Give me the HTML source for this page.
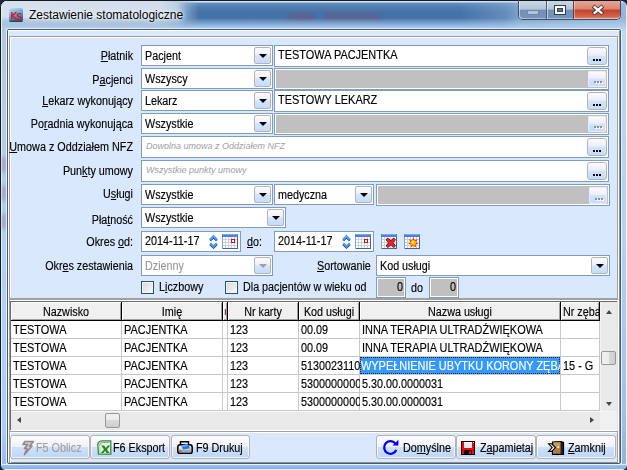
<!DOCTYPE html><html><head><meta charset="utf-8"><style>

html,body{margin:0;padding:0;width:627px;height:470px;overflow:hidden;background:#1b2a3c;}
body{position:relative;font-family:"Liberation Sans",sans-serif;font-size:11px;color:#000;}
div{position:absolute;box-sizing:border-box;}
.t{height:13px;line-height:13px;white-space:nowrap;font-size:11px;-webkit-text-stroke-width:0.2px;}
.t2{height:14px;line-height:14px;white-space:nowrap;font-size:12px;-webkit-text-stroke-width:0.15px;}
.t2 u{text-decoration:underline;text-underline-offset:1px;}
.t u{text-decoration:underline;text-underline-offset:1px;}
.ddb{width:17px;height:17px;border:1px solid #b4b4b4;border-radius:2px;background:linear-gradient(#fbfbff 0%,#eef0fb 45%,#d6e6fc 50%,#c4dcfb 100%);}
.db{border:1px solid #b4b4b4;border-radius:3px;background:linear-gradient(#fbfbff 0%,#eeeefb 45%,#d3e3fb 50%,#c6dcfb 100%);}
.db.dis{border-radius:1px;border-color:#eeeafa;background:linear-gradient(#fbfbff 0%,#eeeefb 45%,#d3e3fb 50%,#c6dcfb 100%);}
.btn{border:1px solid #b3b3b3;border-radius:3px;background:linear-gradient(#fdfdff 0%,#eff0fb 48%,#cfe1f9 52%,#bdd6f6 100%);box-shadow:inset 0 0 0 1px rgba(255,255,255,.7);}

</style></head><body>
<div style="left:0px;top:0px;width:627px;height:470px;border-radius:7px 7px 6px 6px;background:#b7cfea;border-top:1px solid #111a24;border-left:1px solid #111a24;"></div>
<div style="left:1px;top:1px;width:626px;height:469px;border-radius:6px 6px 6px 6px;border:1px solid #e6f0fa;"></div>
<div style="left:1px;top:1px;width:625px;height:28px;border-radius:6px 6px 0 0;background:linear-gradient(180deg,#dce7f2 0px,#dce7f2 1px,#6490c2 2px,#507db1 6px,#4572a6 12px,#4673a7 17px,#6f99c9 21px,#a2c2e7 26px,#b2cdec 28px);"></div>
<div style="left:460px;top:1px;width:166px;height:28px;border-radius:0 6px 0 0;background:linear-gradient(90deg,rgba(170,200,230,0) 0px,rgba(170,200,230,.3) 45px,rgba(180,208,236,.5) 60px,rgba(185,210,238,.7) 166px);"></div>
<div style="left:1px;top:1px;width:215px;height:28px;border-radius:6px 0 0 0;background:linear-gradient(90deg,#d6e1ec 0px,#d2deea 160px,#bccfe2 176px,rgba(170,195,222,.5) 186px,rgba(150,180,215,0) 198px);-webkit-mask-image:linear-gradient(180deg,#000 0px,#000 16px,rgba(0,0,0,.25) 26px,rgba(0,0,0,.15) 28px);"></div>
<div style="left:288px;top:14px;width:26px;height:5px;background:rgba(170,50,70,.35);filter:blur(2px);"></div>
<div style="left:324px;top:14px;width:58px;height:5px;background:rgba(170,50,70,.3);filter:blur(2px);"></div>
<div style="left:1px;top:6px;width:1px;height:458px;background:rgba(235,243,250,.9);"></div>
<div style="left:1px;top:29px;width:6px;height:436px;background:linear-gradient(90deg,#e6f0fa 0px,#e6f0fa 1px,rgba(0,0,0,0) 1px,rgba(0,0,0,0) 5px,rgba(225,238,252,.8) 5px),linear-gradient(180deg,#b4c8de 0px,#b6cce6 120px,#b2d0f4 260px,#aacdf6 400px,#98bce8 436px);border-radius:0 0 0 5px;"></div>
<div style="left:2px;top:157px;width:4px;height:15px;background:rgba(140,100,140,.5);filter:blur(2px);"></div>
<div style="left:2px;top:186px;width:4px;height:15px;background:rgba(140,100,140,.5);filter:blur(2px);"></div>
<div style="left:2px;top:214px;width:4px;height:15px;background:rgba(140,100,140,.5);filter:blur(2px);"></div>
<div style="left:621px;top:29px;width:6px;height:436px;background:linear-gradient(90deg,#e0eefc 0px,#e0eefc 1px,rgba(0,0,0,0) 1px,rgba(0,0,0,0) 5px,#f0f8ff 5px),linear-gradient(180deg,#bcd8f6 0px,#b4d3f5 200px,#9ec2ec 380px,#8db3e2 436px);border-radius:0 0 6px 0;"></div>
<div style="left:1px;top:464px;width:626px;height:6px;background:linear-gradient(180deg,#d8ecfc 0px,#d8ecfc 1px,#9cc1ea 1px,#87afe0 5px,#e8f0f8 5px);border-radius:0 0 5px 5px;"></div>
<div style="left:6px;top:28px;width:616px;height:437px;border:1px solid rgba(235,244,252,.8);border-radius:3px;"></div>
<div style="left:7px;top:29px;width:614px;height:435px;border:1px solid #4a5a6c;border-radius:2px;"></div>
<div style="left:8px;top:30px;width:612px;height:433px;background:#dae8fe;border-top:1px solid #fff;border-left:1px solid #fff;border-right:1px solid #8f8f8f;border-bottom:1px solid #8f8f8f;"></div>
<svg style="position:absolute;left:9px;top:8px;overflow:visible" width="14" height="14" viewBox="0 0 14 14"><defs><linearGradient id="ig" x1="0" y1="0" x2="0.4" y2="1"><stop offset="0" stop-color="#c8e6f6"/><stop offset="0.35" stop-color="#86c4ec"/><stop offset="1" stop-color="#24628f"/></linearGradient></defs><rect x="0" y="0" width="14" height="14" rx="2" fill="url(#ig)"/><rect x="0.5" y="12.8" width="13" height="1.2" rx="0.6" fill="#183a58" opacity=".75"/><path d="M1.5 2.2 L12.5 2.2" stroke="#8d9aa6" stroke-width="1" stroke-dasharray="1.2 .5" opacity=".6"/><path d="M2.8 4 L2.8 11.6 M7.4 4 L3.4 7.6 L7.6 11.6" fill="none" stroke="#e5141e" stroke-width="1.45"/><path d="M12.2 6.3 Q11.2 5.5 9.8 5.6 Q8 5.8 8.3 7.3 Q8.6 8.3 10.3 8.6 Q12.3 9 12.1 10.5 Q11.7 11.8 9.6 11.7 Q8.3 11.6 7.7 11" fill="none" stroke="#e5141e" stroke-width="1.35"/></svg>
<div style="left:29px;top:8px;font-size:12px;line-height:14px;color:#000;white-space:nowrap;text-shadow:0 0 6px rgba(255,255,255,.9),0 0 3px rgba(255,255,255,.8);">Zestawienie stomatologiczne</div>
<div style="left:518px;top:0px;width:103px;height:20px;border:1px solid #3f4e60;border-top:none;border-radius:0 0 5px 5px;overflow:hidden;"></div>
<div style="left:519px;top:1px;width:27px;height:18px;background:linear-gradient(180deg,#cbd8e6 0%,#b3c4d7 45%,#7090b7 52%,#7595bd 100%);border-radius:0 0 0 4px;box-shadow:inset 1px 0 0 rgba(255,255,255,.5),inset 0 -1px 0 rgba(255,255,255,.4);"></div>
<div style="left:546px;top:1px;width:1px;height:18px;background:#4d5c6e;"></div>
<div style="left:547px;top:1px;width:26px;height:18px;background:linear-gradient(180deg,#cbd8e6 0%,#b3c4d7 45%,#7090b7 52%,#7595bd 100%);box-shadow:inset 1px 0 0 rgba(255,255,255,.5),inset 0 -1px 0 rgba(255,255,255,.4);"></div>
<div style="left:573px;top:1px;width:1px;height:18px;background:#6a3a30;"></div>
<div style="left:574px;top:1px;width:46px;height:18px;background:linear-gradient(180deg,#e7a796 0%,#d78571 45%,#c2412a 50%,#d2634a 85%,#e5917a 100%);border-radius:0 0 4px 0;box-shadow:inset 1px 0 0 rgba(255,255,255,.4),inset 0 -1px 0 rgba(255,255,255,.4);"></div>
<div style="left:527px;top:10px;width:12px;height:5px;background:#b2c4d8;border:1px solid #74879e;"></div>
<div style="left:554px;top:5px;width:12px;height:10px;border:1px solid #2f3d52;background:#fff;"></div>
<div style="left:557px;top:8px;width:6px;height:4px;background:#5a7090;border:1px solid #34465e;"></div>
<svg style="position:absolute;left:590px;top:3px;overflow:visible" width="16" height="14" viewBox="0 0 16 14"><path d="M4.6 4.2 L11.4 9.8 M11.4 4.2 L4.6 9.8" stroke="#3a3434" stroke-width="4.0" stroke-linecap="square"/><path d="M4.6 4.2 L11.4 9.8 M11.4 4.2 L4.6 9.8" stroke="#ffffff" stroke-width="2.3" stroke-linecap="square"/></svg>
<div style="left:10px;top:37px;width:609px;height:263px;border:1px solid #fff;"></div>
<div style="left:9px;top:36px;width:609px;height:263px;border:1px solid #a0a0a0;"></div>
<div class="t2" style="left:-167px;width:300px;text-align:right;top:49px;transform:scaleX(0.8942);transform-origin:100% 0;"><u>P</u>łatnik</div>
<div style="left:141px;top:45px;width:132px;height:21px;border:1px solid #7f9db9;box-sizing:border-box;background:#fff;"></div>
<div class="ddb" style="left:254px;top:47px;"></div>
<div style="left:258.5px;top:54px;width:0;height:0;border-left:4px solid transparent;border-right:4px solid transparent;border-top:4px solid #000;"></div>
<div class="t2" style="left:145px;top:49px;transform:scaleX(0.8962);transform-origin:0 0;color:#000;">Pacjent</div>
<div style="left:274px;top:45px;width:335px;height:22px;border:1px solid #7f9db9;box-sizing:border-box;background:#fff;"></div>
<div class="t2" style="left:278px;top:48px;transform:scaleX(0.9115);transform-origin:0 0;">TESTOWA PACJENTKA</div>
<div class="db" style="left:587px;top:47px;width:20px;height:18px;"></div>
<div style="left:593px;top:59px;width:2px;height:2px;background:#000;"></div>
<div style="left:596px;top:59px;width:2px;height:2px;background:#000;"></div>
<div style="left:599px;top:59px;width:2px;height:2px;background:#000;"></div>
<div class="t2" style="left:-167px;width:300px;text-align:right;top:73px;transform:scaleX(0.8954);transform-origin:100% 0;">P<u>a</u>cjenci</div>
<div style="left:141px;top:68px;width:132px;height:21px;border:1px solid #7f9db9;box-sizing:border-box;background:#fff;"></div>
<div class="ddb" style="left:254px;top:70px;"></div>
<div style="left:258.5px;top:77px;width:0;height:0;border-left:4px solid transparent;border-right:4px solid transparent;border-top:4px solid #000;"></div>
<div class="t2" style="left:145px;top:72px;transform:scaleX(0.8996);transform-origin:0 0;color:#000;">Wszyscy</div>
<div style="left:274px;top:68px;width:335px;height:22px;border:1px solid #7f9db9;box-sizing:border-box;background:#c0c0c0;box-shadow:inset 1px 1px 0 #fff,inset -1px -1px 0 #fff;"></div>
<div class="db dis" style="left:588px;top:71px;width:18px;height:16px;"></div>
<div style="left:595px;top:82px;width:2px;height:2px;background:#fff;"></div>
<div style="left:594px;top:81px;width:2px;height:2px;background:#8f8f8f;"></div>
<div style="left:598px;top:82px;width:2px;height:2px;background:#fff;"></div>
<div style="left:597px;top:81px;width:2px;height:2px;background:#8f8f8f;"></div>
<div style="left:601px;top:82px;width:2px;height:2px;background:#fff;"></div>
<div style="left:600px;top:81px;width:2px;height:2px;background:#8f8f8f;"></div>
<div class="t2" style="left:-167px;width:300px;text-align:right;top:94px;transform:scaleX(0.8958);transform-origin:100% 0;"><u>L</u>ekarz wykonujący</div>
<div style="left:141px;top:90px;width:132px;height:21px;border:1px solid #7f9db9;box-sizing:border-box;background:#fff;"></div>
<div class="ddb" style="left:254px;top:92px;"></div>
<div style="left:258.5px;top:99px;width:0;height:0;border-left:4px solid transparent;border-right:4px solid transparent;border-top:4px solid #000;"></div>
<div class="t2" style="left:145px;top:94px;transform:scaleX(0.8972);transform-origin:0 0;color:#000;">Lekarz</div>
<div style="left:274px;top:90px;width:335px;height:22px;border:1px solid #7f9db9;box-sizing:border-box;background:#fff;"></div>
<div class="t2" style="left:278px;top:93px;transform:scaleX(0.9115);transform-origin:0 0;">TESTOWY LEKARZ</div>
<div class="db" style="left:587px;top:92px;width:20px;height:18px;"></div>
<div style="left:593px;top:104px;width:2px;height:2px;background:#000;"></div>
<div style="left:596px;top:104px;width:2px;height:2px;background:#000;"></div>
<div style="left:599px;top:104px;width:2px;height:2px;background:#000;"></div>
<div class="t2" style="left:-167px;width:300px;text-align:right;top:117px;transform:scaleX(0.8959);transform-origin:100% 0;">Po<u>r</u>adnia wykonująca</div>
<div style="left:141px;top:113px;width:132px;height:21px;border:1px solid #7f9db9;box-sizing:border-box;background:#fff;"></div>
<div class="ddb" style="left:254px;top:115px;"></div>
<div style="left:258.5px;top:122px;width:0;height:0;border-left:4px solid transparent;border-right:4px solid transparent;border-top:4px solid #000;"></div>
<div class="t2" style="left:145px;top:117px;transform:scaleX(0.8967);transform-origin:0 0;color:#000;">Wszystkie</div>
<div style="left:274px;top:113px;width:335px;height:22px;border:1px solid #7f9db9;box-sizing:border-box;background:#c0c0c0;box-shadow:inset 1px 1px 0 #fff,inset -1px -1px 0 #fff;"></div>
<div class="db dis" style="left:588px;top:116px;width:18px;height:16px;"></div>
<div style="left:595px;top:127px;width:2px;height:2px;background:#fff;"></div>
<div style="left:594px;top:126px;width:2px;height:2px;background:#8f8f8f;"></div>
<div style="left:598px;top:127px;width:2px;height:2px;background:#fff;"></div>
<div style="left:597px;top:126px;width:2px;height:2px;background:#8f8f8f;"></div>
<div style="left:601px;top:127px;width:2px;height:2px;background:#fff;"></div>
<div style="left:600px;top:126px;width:2px;height:2px;background:#8f8f8f;"></div>
<div class="t2" style="left:-167px;width:300px;text-align:right;top:140px;transform:scaleX(0.9006);transform-origin:100% 0;"><u>U</u>mowa z Oddziałem NFZ</div>
<div style="left:141px;top:136px;width:468px;height:22px;border:1px solid #7f9db9;box-sizing:border-box;background:#fff;"></div>
<div class="t" style="left:146px;top:140px;font-style:italic;color:#a0a0a0;font-size:9px;-webkit-text-stroke-width:0;">Dowolna umowa z Oddziałem NFZ</div>
<div class="db" style="left:587px;top:138px;width:20px;height:18px;"></div>
<div style="left:593px;top:150px;width:2px;height:2px;background:#000;"></div>
<div style="left:596px;top:150px;width:2px;height:2px;background:#000;"></div>
<div style="left:599px;top:150px;width:2px;height:2px;background:#000;"></div>
<div class="t2" style="left:-167px;width:300px;text-align:right;top:164px;transform:scaleX(0.8981);transform-origin:100% 0;">Pun<u>k</u>ty umowy</div>
<div style="left:141px;top:160px;width:468px;height:22px;border:1px solid #7f9db9;box-sizing:border-box;background:#fff;"></div>
<div class="t" style="left:146px;top:164px;font-style:italic;color:#a0a0a0;font-size:9px;-webkit-text-stroke-width:0;">Wszystkie punkty umowy</div>
<div class="db" style="left:587px;top:162px;width:20px;height:18px;"></div>
<div style="left:593px;top:174px;width:2px;height:2px;background:#000;"></div>
<div style="left:596px;top:174px;width:2px;height:2px;background:#000;"></div>
<div style="left:599px;top:174px;width:2px;height:2px;background:#000;"></div>
<div class="t2" style="left:-167px;width:300px;text-align:right;top:187px;transform:scaleX(0.8965);transform-origin:100% 0;">U<u>s</u>ługi</div>
<div style="left:141px;top:184px;width:132px;height:21px;border:1px solid #7f9db9;box-sizing:border-box;background:#fff;"></div>
<div class="ddb" style="left:254px;top:186px;"></div>
<div style="left:258.5px;top:193px;width:0;height:0;border-left:4px solid transparent;border-right:4px solid transparent;border-top:4px solid #000;"></div>
<div class="t2" style="left:145px;top:188px;transform:scaleX(0.8967);transform-origin:0 0;color:#000;">Wszystkie</div>
<div style="left:274px;top:184px;width:100px;height:21px;border:1px solid #7f9db9;box-sizing:border-box;background:#fff;"></div>
<div class="ddb" style="left:355px;top:186px;"></div>
<div style="left:359.5px;top:193px;width:0;height:0;border-left:4px solid transparent;border-right:4px solid transparent;border-top:4px solid #000;"></div>
<div class="t2" style="left:278px;top:188px;transform:scaleX(0.8977);transform-origin:0 0;color:#000;">medyczna</div>
<div style="left:376px;top:184px;width:234px;height:22px;border:1px solid #7f9db9;box-sizing:border-box;background:#c0c0c0;box-shadow:inset 1px 1px 0 #fff,inset -1px -1px 0 #fff;"></div>
<div class="db dis" style="left:589px;top:187px;width:18px;height:17px;"></div>
<div style="left:596px;top:199px;width:2px;height:2px;background:#fff;"></div>
<div style="left:595px;top:198px;width:2px;height:2px;background:#8f8f8f;"></div>
<div style="left:599px;top:199px;width:2px;height:2px;background:#fff;"></div>
<div style="left:598px;top:198px;width:2px;height:2px;background:#8f8f8f;"></div>
<div style="left:602px;top:199px;width:2px;height:2px;background:#fff;"></div>
<div style="left:601px;top:198px;width:2px;height:2px;background:#8f8f8f;"></div>
<div class="t2" style="left:-167px;width:300px;text-align:right;top:213px;transform:scaleX(0.8958);transform-origin:100% 0;">Pła<u>t</u>ność</div>
<div style="left:141px;top:207px;width:145px;height:21px;border:1px solid #7f9db9;box-sizing:border-box;background:#fff;"></div>
<div class="ddb" style="left:267px;top:209px;"></div>
<div style="left:271.5px;top:216px;width:0;height:0;border-left:4px solid transparent;border-right:4px solid transparent;border-top:4px solid #000;"></div>
<div class="t2" style="left:145px;top:211px;transform:scaleX(0.8967);transform-origin:0 0;color:#000;">Wszystkie</div>
<div class="t2" style="left:-167px;width:300px;text-align:right;top:235px;transform:scaleX(0.8967);transform-origin:100% 0;">Okres <u>o</u>d:</div>
<div style="left:141px;top:231px;width:100px;height:21px;border:1px solid #7f9db9;box-sizing:border-box;background:#fff;"></div>
<div class="t2" style="left:145px;top:234px;transform:scaleX(0.9001);transform-origin:0 0;">2014-11-17</div>
<div style="left:274px;top:231px;width:100px;height:21px;border:1px solid #7f9db9;box-sizing:border-box;background:#fff;"></div>
<div class="t2" style="left:278px;top:234px;transform:scaleX(0.9001);transform-origin:0 0;">2014-11-17</div>
<div class="t2" style="left:247px;top:235px;transform:scaleX(0.8934);transform-origin:0 0;"><u>d</u>o:</div>
<svg style="position:absolute;left:209px;top:234px;overflow:visible" width="10" height="15" viewBox="0 0 10 15"><path d="M1.2 5.6 L4.5 2.3 L7.8 5.6" fill="none" stroke="#123f96" stroke-width="2.4" stroke-linecap="butt" transform="translate(0,0.9)"/><path d="M1.2 5.6 L4.5 2.3 L7.8 5.6" fill="none" stroke="#4c9df6" stroke-width="2.2" stroke-linecap="butt"/><path d="M1.2 9.2 L4.5 12.5 L7.8 9.2" fill="none" stroke="#123f96" stroke-width="2.4" stroke-linecap="butt" transform="translate(0,0.9)"/><path d="M1.2 9.2 L4.5 12.5 L7.8 9.2" fill="none" stroke="#4c9df6" stroke-width="2.2" stroke-linecap="butt"/></svg>
<svg style="position:absolute;left:222px;top:234px;overflow:visible" width="16" height="15" viewBox="0 0 16 15" shape-rendering="crispEdges"><rect x="0" y="0" width="16" height="15" fill="#c4d2e6"/><rect x="15" y="0" width="1" height="15" fill="#4a6384"/><rect x="0" y="14" width="16" height="1" fill="#4a6384"/><rect x="0" y="0" width="1" height="15" fill="#8aa4c8"/><rect x="0" y="0" width="16" height="3" fill="#4b7fdc"/><rect x="1" y="0" width="14" height="1" fill="#7fa6ee"/><rect x="1" y="3" width="2" height="2" fill="#fff"/><rect x="4" y="3" width="2" height="2" fill="#fff"/><rect x="7" y="3" width="2" height="2" fill="#fff"/><rect x="10" y="3" width="2" height="2" fill="#fff"/><rect x="13" y="3" width="2" height="2" fill="#fff"/><rect x="1" y="6" width="2" height="2" fill="#fff"/><rect x="4" y="6" width="2" height="2" fill="#fff"/><rect x="7" y="6" width="2" height="2" fill="#fff"/><rect x="10" y="6" width="2" height="2" fill="#fff"/><rect x="13" y="6" width="2" height="2" fill="#fff"/><rect x="1" y="9" width="2" height="2" fill="#fff"/><rect x="4" y="9" width="2" height="2" fill="#fff"/><rect x="7" y="9" width="2" height="2" fill="#fff"/><rect x="10" y="9" width="2" height="2" fill="#fff"/><rect x="13" y="9" width="2" height="2" fill="#fff"/><rect x="1" y="12" width="2" height="2" fill="#fff"/><rect x="4" y="12" width="2" height="2" fill="#fff"/><rect x="7" y="12" width="2" height="2" fill="#fff"/><rect x="10" y="12" width="2" height="2" fill="#fff"/><rect x="13" y="12" width="2" height="2" fill="#fff"/><rect x="9" y="5" width="4" height="1" fill="#f00"/><rect x="9" y="8" width="4" height="1" fill="#f00"/><rect x="9" y="5" width="1" height="4" fill="#f00"/><rect x="12" y="5" width="1" height="4" fill="#f00"/></svg>
<svg style="position:absolute;left:342px;top:234px;overflow:visible" width="10" height="15" viewBox="0 0 10 15"><path d="M1.2 5.6 L4.5 2.3 L7.8 5.6" fill="none" stroke="#123f96" stroke-width="2.4" stroke-linecap="butt" transform="translate(0,0.9)"/><path d="M1.2 5.6 L4.5 2.3 L7.8 5.6" fill="none" stroke="#4c9df6" stroke-width="2.2" stroke-linecap="butt"/><path d="M1.2 9.2 L4.5 12.5 L7.8 9.2" fill="none" stroke="#123f96" stroke-width="2.4" stroke-linecap="butt" transform="translate(0,0.9)"/><path d="M1.2 9.2 L4.5 12.5 L7.8 9.2" fill="none" stroke="#4c9df6" stroke-width="2.2" stroke-linecap="butt"/></svg>
<svg style="position:absolute;left:355px;top:234px;overflow:visible" width="16" height="15" viewBox="0 0 16 15" shape-rendering="crispEdges"><rect x="0" y="0" width="16" height="15" fill="#c4d2e6"/><rect x="15" y="0" width="1" height="15" fill="#4a6384"/><rect x="0" y="14" width="16" height="1" fill="#4a6384"/><rect x="0" y="0" width="1" height="15" fill="#8aa4c8"/><rect x="0" y="0" width="16" height="3" fill="#4b7fdc"/><rect x="1" y="0" width="14" height="1" fill="#7fa6ee"/><rect x="1" y="3" width="2" height="2" fill="#fff"/><rect x="4" y="3" width="2" height="2" fill="#fff"/><rect x="7" y="3" width="2" height="2" fill="#fff"/><rect x="10" y="3" width="2" height="2" fill="#fff"/><rect x="13" y="3" width="2" height="2" fill="#fff"/><rect x="1" y="6" width="2" height="2" fill="#fff"/><rect x="4" y="6" width="2" height="2" fill="#fff"/><rect x="7" y="6" width="2" height="2" fill="#fff"/><rect x="10" y="6" width="2" height="2" fill="#fff"/><rect x="13" y="6" width="2" height="2" fill="#fff"/><rect x="1" y="9" width="2" height="2" fill="#fff"/><rect x="4" y="9" width="2" height="2" fill="#fff"/><rect x="7" y="9" width="2" height="2" fill="#fff"/><rect x="10" y="9" width="2" height="2" fill="#fff"/><rect x="13" y="9" width="2" height="2" fill="#fff"/><rect x="1" y="12" width="2" height="2" fill="#fff"/><rect x="4" y="12" width="2" height="2" fill="#fff"/><rect x="7" y="12" width="2" height="2" fill="#fff"/><rect x="10" y="12" width="2" height="2" fill="#fff"/><rect x="13" y="12" width="2" height="2" fill="#fff"/><rect x="9" y="5" width="4" height="1" fill="#f00"/><rect x="9" y="8" width="4" height="1" fill="#f00"/><rect x="9" y="5" width="1" height="4" fill="#f00"/><rect x="12" y="5" width="1" height="4" fill="#f00"/></svg>
<svg style="position:absolute;left:381px;top:234px;overflow:visible" width="16" height="15" viewBox="0 0 16 15" shape-rendering="crispEdges"><rect x="0" y="0" width="16" height="15" fill="#c4d2e6"/><rect x="15" y="0" width="1" height="15" fill="#4a6384"/><rect x="0" y="14" width="16" height="1" fill="#4a6384"/><rect x="0" y="0" width="1" height="15" fill="#8aa4c8"/><rect x="0" y="0" width="16" height="3" fill="#4b7fdc"/><rect x="1" y="0" width="14" height="1" fill="#7fa6ee"/><rect x="1" y="3" width="2" height="2" fill="#fff"/><rect x="4" y="3" width="2" height="2" fill="#fff"/><rect x="7" y="3" width="2" height="2" fill="#fff"/><rect x="10" y="3" width="2" height="2" fill="#fff"/><rect x="13" y="3" width="2" height="2" fill="#fff"/><rect x="1" y="6" width="2" height="2" fill="#fff"/><rect x="4" y="6" width="2" height="2" fill="#fff"/><rect x="7" y="6" width="2" height="2" fill="#fff"/><rect x="10" y="6" width="2" height="2" fill="#fff"/><rect x="13" y="6" width="2" height="2" fill="#fff"/><rect x="1" y="9" width="2" height="2" fill="#fff"/><rect x="4" y="9" width="2" height="2" fill="#fff"/><rect x="7" y="9" width="2" height="2" fill="#fff"/><rect x="10" y="9" width="2" height="2" fill="#fff"/><rect x="13" y="9" width="2" height="2" fill="#fff"/><rect x="1" y="12" width="2" height="2" fill="#fff"/><rect x="4" y="12" width="2" height="2" fill="#fff"/><rect x="7" y="12" width="2" height="2" fill="#fff"/><rect x="10" y="12" width="2" height="2" fill="#fff"/><rect x="13" y="12" width="2" height="2" fill="#fff"/><g shape-rendering="geometricPrecision"><path d="M6.8 5.8 L12.8 11.8 M12.8 5.8 L6.8 11.8" stroke="#6a0a0a" stroke-width="3.6" stroke-linecap="round"/><path d="M6.8 5.8 L12.8 11.8 M12.8 5.8 L6.8 11.8" stroke="#e0262a" stroke-width="2.4" stroke-linecap="round"/></g></svg>
<svg style="position:absolute;left:404px;top:234px;overflow:visible" width="16" height="15" viewBox="0 0 16 15" shape-rendering="crispEdges"><rect x="0" y="0" width="16" height="15" fill="#c4d2e6"/><rect x="15" y="0" width="1" height="15" fill="#4a6384"/><rect x="0" y="14" width="16" height="1" fill="#4a6384"/><rect x="0" y="0" width="1" height="15" fill="#8aa4c8"/><rect x="0" y="0" width="16" height="3" fill="#4b7fdc"/><rect x="1" y="0" width="14" height="1" fill="#7fa6ee"/><rect x="1" y="3" width="2" height="2" fill="#fff"/><rect x="4" y="3" width="2" height="2" fill="#fff"/><rect x="7" y="3" width="2" height="2" fill="#fff"/><rect x="10" y="3" width="2" height="2" fill="#fff"/><rect x="13" y="3" width="2" height="2" fill="#fff"/><rect x="1" y="6" width="2" height="2" fill="#fff"/><rect x="4" y="6" width="2" height="2" fill="#fff"/><rect x="7" y="6" width="2" height="2" fill="#fff"/><rect x="10" y="6" width="2" height="2" fill="#fff"/><rect x="13" y="6" width="2" height="2" fill="#fff"/><rect x="1" y="9" width="2" height="2" fill="#fff"/><rect x="4" y="9" width="2" height="2" fill="#fff"/><rect x="7" y="9" width="2" height="2" fill="#fff"/><rect x="10" y="9" width="2" height="2" fill="#fff"/><rect x="13" y="9" width="2" height="2" fill="#fff"/><rect x="1" y="12" width="2" height="2" fill="#fff"/><rect x="4" y="12" width="2" height="2" fill="#fff"/><rect x="7" y="12" width="2" height="2" fill="#fff"/><rect x="10" y="12" width="2" height="2" fill="#fff"/><rect x="13" y="12" width="2" height="2" fill="#fff"/><g shape-rendering="geometricPrecision" transform="translate(9.3,8.6) scale(0.8) translate(-9.5,-9)"><path d="M9.5 2 L11 6 L15 4.5 L13 8.5 L16 10.5 L12.5 11.5 L13 15 L9.5 13 L6.5 15 L6.5 11.5 L3 10.5 L6 8.5 L4 4.5 L8 6 Z" fill="#ff3000"/><circle cx="9.5" cy="9.2" r="3.6" fill="#ffa800"/><circle cx="9" cy="8.5" r="2" fill="#ffee30"/></g></svg>
<div class="t2" style="left:-167px;width:300px;text-align:right;top:259px;transform:scaleX(0.8950);transform-origin:100% 0;">Okr<u>e</u>s zestawienia</div>
<div style="left:141px;top:255px;width:132px;height:21px;border:1px solid #7f9db9;box-sizing:border-box;background:#fff;"></div>
<div class="ddb" style="left:254px;top:257px;"></div>
<div style="left:258.5px;top:264px;width:0;height:0;border-left:4px solid transparent;border-right:4px solid transparent;border-top:4px solid #a0a0a0;"></div>
<div class="t2" style="left:145px;top:259px;transform:scaleX(0.8977);transform-origin:0 0;color:#9a9a9a;">Dzienny</div>
<div class="t2" style="left:317px;top:259px;transform:scaleX(0.8964);transform-origin:0 0;"><u>S</u>ortowanie</div>
<div style="left:376px;top:255px;width:234px;height:21px;border:1px solid #7f9db9;box-sizing:border-box;background:#fff;"></div>
<div class="ddb" style="left:591px;top:257px;"></div>
<div style="left:595.5px;top:264px;width:0;height:0;border-left:4px solid transparent;border-right:4px solid transparent;border-top:4px solid #000;"></div>
<div class="t2" style="left:380px;top:259px;transform:scaleX(0.8952);transform-origin:0 0;color:#000;">Kod usługi</div>
<div style="left:141px;top:281px;width:13px;height:13px;border:1px solid #1c5180;background:linear-gradient(135deg,#d6d6d0,#fbfbf8);box-shadow:inset 0 0 0 1px #f8f8f8;"></div>
<div style="left:225px;top:281px;width:13px;height:13px;border:1px solid #1c5180;background:linear-gradient(135deg,#d6d6d0,#fbfbf8);box-shadow:inset 0 0 0 1px #f8f8f8;"></div>
<div class="t2" style="left:159px;top:280px;transform:scaleX(0.8972);transform-origin:0 0;">L<u>i</u>czbowy</div>
<div class="t2" style="left:243px;top:280px;transform:scaleX(0.8948);transform-origin:0 0;">Dla pacjentów w wieku od</div>
<div style="left:376px;top:277px;width:30px;height:21px;border:1px solid #7f9db9;box-sizing:border-box;background:#c0c0c0;box-shadow:inset 1px 1px 0 #fff,inset -1px -1px 0 #fff;"></div>
<div class="t2" style="left:397px;top:280px;transform:scaleX(0.9019);transform-origin:0 0;">0</div>
<div class="t2" style="left:411px;top:281px;transform:scaleX(0.8971);transform-origin:0 0;">do</div>
<div style="left:429px;top:277px;width:30px;height:21px;border:1px solid #7f9db9;box-sizing:border-box;background:#c0c0c0;box-shadow:inset 1px 1px 0 #fff,inset -1px -1px 0 #fff;"></div>
<div class="t2" style="left:450px;top:280px;transform:scaleX(0.9019);transform-origin:0 0;">0</div>
<div style="left:9px;top:299px;width:610px;height:134px;background:#dae8fe;"></div>
<div style="left:10px;top:300px;width:609px;height:132px;border:1px solid #fff;"></div>
<div style="left:9px;top:299px;width:609px;height:132px;border:1px solid #a0a0a0;"></div>
<div style="left:10px;top:300px;width:608px;height:131px;background:#fff;border-bottom:1px solid #fff;"></div>
<div style="left:10px;top:301px;width:607px;height:129px;border-left:1px solid #696969;border-top:1px solid #696969;"></div>
<div style="left:11px;top:302px;width:589px;height:19px;background:#f0f0f0;"></div>
<div style="left:11px;top:302px;width:111px;height:19px;border-right:1px solid #000;border-bottom:1px solid #000;box-shadow:inset 1px 1px 0 #fff,inset -1px -1px 0 #a0a0a0;"></div>
<div class="t2" style="left:11px;width:110px;text-align:center;top:305px;transform:scaleX(0.8981);transform-origin:50% 0;">Nazwisko</div>
<div style="left:122px;top:302px;width:101px;height:19px;border-right:1px solid #000;border-bottom:1px solid #000;box-shadow:inset 1px 1px 0 #fff,inset -1px -1px 0 #a0a0a0;"></div>
<div class="t2" style="left:122px;width:100px;text-align:center;top:305px;transform:scaleX(0.8980);transform-origin:50% 0;">Imię</div>
<div style="left:223px;top:302px;width:5px;height:19px;border-right:1px solid #000;border-bottom:1px solid #000;box-shadow:inset 1px 1px 0 #fff,inset -1px -1px 0 #a0a0a0;"></div>
<div style="left:228px;top:302px;width:71px;height:19px;border-right:1px solid #000;border-bottom:1px solid #000;box-shadow:inset 1px 1px 0 #fff,inset -1px -1px 0 #a0a0a0;"></div>
<div class="t2" style="left:228px;width:70px;text-align:center;top:305px;transform:scaleX(0.8947);transform-origin:50% 0;">Nr karty</div>
<div style="left:299px;top:302px;width:61px;height:19px;border-right:1px solid #000;border-bottom:1px solid #000;box-shadow:inset 1px 1px 0 #fff,inset -1px -1px 0 #a0a0a0;"></div>
<div class="t2" style="left:299px;width:60px;text-align:center;top:305px;transform:scaleX(0.8952);transform-origin:50% 0;">Kod usługi</div>
<div style="left:360px;top:302px;width:201px;height:19px;border-right:1px solid #000;border-bottom:1px solid #000;box-shadow:inset 1px 1px 0 #fff,inset -1px -1px 0 #a0a0a0;"></div>
<div class="t2" style="left:360px;width:200px;text-align:center;top:305px;transform:scaleX(0.8962);transform-origin:50% 0;">Nazwa usługi</div>
<div style="left:561px;top:302px;width:39px;height:19px;border-right:1px solid #000;border-bottom:1px solid #000;box-shadow:inset 1px 1px 0 #fff,inset -1px -1px 0 #a0a0a0;"></div>
<div class="t2" style="left:561px;width:38px;text-align:center;top:305px;transform:scaleX(0.8974);transform-origin:50% 0;">Nr zęba</div>
<div style="left:224px;top:309px;width:1px;height:6px;background:rgba(230,200,120,.7);"></div>
<div style="left:225px;top:309px;width:1px;height:6px;background:rgba(70,20,90,.8);"></div>
<div style="left:11px;top:338px;width:589px;height:1px;background:#c8c8c8;"></div>
<div style="left:121px;top:321px;width:1px;height:18px;background:#c8c8c8;"></div>
<div style="left:13px;top:323px;width:109px;height:14px;overflow:hidden;"><div class="t2" style="left:0;top:0;transform:scaleX(0.9121);transform-origin:0 0;">TESTOWA</div></div>
<div style="left:222px;top:321px;width:1px;height:18px;background:#c8c8c8;"></div>
<div style="left:124px;top:323px;width:99px;height:14px;overflow:hidden;"><div class="t2" style="left:0;top:0;transform:scaleX(0.9116);transform-origin:0 0;">PACJENTKA</div></div>
<div style="left:227px;top:321px;width:1px;height:18px;background:#c8c8c8;"></div>
<div style="left:298px;top:321px;width:1px;height:18px;background:#c8c8c8;"></div>
<div style="left:230px;top:323px;width:69px;height:14px;overflow:hidden;"><div class="t2" style="left:0;top:0;transform:scaleX(0.9017);transform-origin:0 0;">123</div></div>
<div style="left:359px;top:321px;width:1px;height:18px;background:#c8c8c8;"></div>
<div style="left:301px;top:323px;width:59px;height:14px;overflow:hidden;"><div class="t2" style="left:0;top:0;transform:scaleX(0.9001);transform-origin:0 0;">00.09</div></div>
<div style="left:560px;top:321px;width:1px;height:18px;background:#c8c8c8;"></div>
<div style="left:362px;top:323px;width:199px;height:14px;overflow:hidden;"><div class="t2" style="left:0;top:0;transform:scaleX(0.9112);transform-origin:0 0;">INNA TERAPIA ULTRADŹWIĘKOWA</div></div>
<div style="left:599px;top:321px;width:1px;height:18px;background:#c8c8c8;"></div>
<div style="left:11px;top:356px;width:589px;height:1px;background:#c8c8c8;"></div>
<div style="left:121px;top:339px;width:1px;height:18px;background:#c8c8c8;"></div>
<div style="left:13px;top:341px;width:109px;height:14px;overflow:hidden;"><div class="t2" style="left:0;top:0;transform:scaleX(0.9121);transform-origin:0 0;">TESTOWA</div></div>
<div style="left:222px;top:339px;width:1px;height:18px;background:#c8c8c8;"></div>
<div style="left:124px;top:341px;width:99px;height:14px;overflow:hidden;"><div class="t2" style="left:0;top:0;transform:scaleX(0.9116);transform-origin:0 0;">PACJENTKA</div></div>
<div style="left:227px;top:339px;width:1px;height:18px;background:#c8c8c8;"></div>
<div style="left:298px;top:339px;width:1px;height:18px;background:#c8c8c8;"></div>
<div style="left:230px;top:341px;width:69px;height:14px;overflow:hidden;"><div class="t2" style="left:0;top:0;transform:scaleX(0.9017);transform-origin:0 0;">123</div></div>
<div style="left:359px;top:339px;width:1px;height:18px;background:#c8c8c8;"></div>
<div style="left:301px;top:341px;width:59px;height:14px;overflow:hidden;"><div class="t2" style="left:0;top:0;transform:scaleX(0.9001);transform-origin:0 0;">00.09</div></div>
<div style="left:560px;top:339px;width:1px;height:18px;background:#c8c8c8;"></div>
<div style="left:362px;top:341px;width:199px;height:14px;overflow:hidden;"><div class="t2" style="left:0;top:0;transform:scaleX(0.9112);transform-origin:0 0;">INNA TERAPIA ULTRADŹWIĘKOWA</div></div>
<div style="left:599px;top:339px;width:1px;height:18px;background:#c8c8c8;"></div>
<div style="left:11px;top:374px;width:589px;height:1px;background:#c8c8c8;"></div>
<div style="left:121px;top:357px;width:1px;height:18px;background:#c8c8c8;"></div>
<div style="left:13px;top:359px;width:109px;height:14px;overflow:hidden;"><div class="t2" style="left:0;top:0;transform:scaleX(0.9121);transform-origin:0 0;">TESTOWA</div></div>
<div style="left:222px;top:357px;width:1px;height:18px;background:#c8c8c8;"></div>
<div style="left:124px;top:359px;width:99px;height:14px;overflow:hidden;"><div class="t2" style="left:0;top:0;transform:scaleX(0.9116);transform-origin:0 0;">PACJENTKA</div></div>
<div style="left:227px;top:357px;width:1px;height:18px;background:#c8c8c8;"></div>
<div style="left:298px;top:357px;width:1px;height:18px;background:#c8c8c8;"></div>
<div style="left:230px;top:359px;width:69px;height:14px;overflow:hidden;"><div class="t2" style="left:0;top:0;transform:scaleX(0.9017);transform-origin:0 0;">123</div></div>
<div style="left:359px;top:357px;width:1px;height:18px;background:#c8c8c8;"></div>
<div style="left:301px;top:359px;width:59px;height:14px;overflow:hidden;"><div class="t2" style="left:0;top:0;transform:scaleX(0.9016);transform-origin:0 0;">513002311001</div></div>
<div style="left:560px;top:357px;width:1px;height:18px;background:#c8c8c8;"></div>
<div style="left:360px;top:357px;width:200px;height:17px;background:#3399ff;outline:1px dotted #222;outline-offset:-1px;"></div>
<div style="left:361px;top:359px;width:199px;height:14px;overflow:hidden;"><div class="t2" style="left:0;top:0;transform:scaleX(0.9113);transform-origin:0 0;color:#fff;">WYPEŁNIENIE UBYTKU KORONY ZĘBA</div></div>
<div style="left:599px;top:357px;width:1px;height:18px;background:#c8c8c8;"></div>
<div style="left:563px;top:359px;width:37px;height:14px;overflow:hidden;"><div class="t2" style="left:0;top:0;transform:scaleX(0.9091);transform-origin:0 0;">15 - G</div></div>
<div style="left:11px;top:392px;width:589px;height:1px;background:#c8c8c8;"></div>
<div style="left:121px;top:375px;width:1px;height:18px;background:#c8c8c8;"></div>
<div style="left:13px;top:377px;width:109px;height:14px;overflow:hidden;"><div class="t2" style="left:0;top:0;transform:scaleX(0.9121);transform-origin:0 0;">TESTOWA</div></div>
<div style="left:222px;top:375px;width:1px;height:18px;background:#c8c8c8;"></div>
<div style="left:124px;top:377px;width:99px;height:14px;overflow:hidden;"><div class="t2" style="left:0;top:0;transform:scaleX(0.9116);transform-origin:0 0;">PACJENTKA</div></div>
<div style="left:227px;top:375px;width:1px;height:18px;background:#c8c8c8;"></div>
<div style="left:298px;top:375px;width:1px;height:18px;background:#c8c8c8;"></div>
<div style="left:230px;top:377px;width:69px;height:14px;overflow:hidden;"><div class="t2" style="left:0;top:0;transform:scaleX(0.9017);transform-origin:0 0;">123</div></div>
<div style="left:359px;top:375px;width:1px;height:18px;background:#c8c8c8;"></div>
<div style="left:301px;top:377px;width:59px;height:14px;overflow:hidden;"><div class="t2" style="left:0;top:0;transform:scaleX(0.9017);transform-origin:0 0;">530000000031</div></div>
<div style="left:560px;top:375px;width:1px;height:18px;background:#c8c8c8;"></div>
<div style="left:362px;top:377px;width:199px;height:14px;overflow:hidden;"><div class="t2" style="left:0;top:0;transform:scaleX(0.9001);transform-origin:0 0;">5.30.00.0000031</div></div>
<div style="left:599px;top:375px;width:1px;height:18px;background:#c8c8c8;"></div>
<div style="left:11px;top:410px;width:589px;height:1px;background:#c8c8c8;"></div>
<div style="left:121px;top:393px;width:1px;height:18px;background:#c8c8c8;"></div>
<div style="left:13px;top:395px;width:109px;height:14px;overflow:hidden;"><div class="t2" style="left:0;top:0;transform:scaleX(0.9121);transform-origin:0 0;">TESTOWA</div></div>
<div style="left:222px;top:393px;width:1px;height:18px;background:#c8c8c8;"></div>
<div style="left:124px;top:395px;width:99px;height:14px;overflow:hidden;"><div class="t2" style="left:0;top:0;transform:scaleX(0.9116);transform-origin:0 0;">PACJENTKA</div></div>
<div style="left:227px;top:393px;width:1px;height:18px;background:#c8c8c8;"></div>
<div style="left:298px;top:393px;width:1px;height:18px;background:#c8c8c8;"></div>
<div style="left:230px;top:395px;width:69px;height:14px;overflow:hidden;"><div class="t2" style="left:0;top:0;transform:scaleX(0.9017);transform-origin:0 0;">123</div></div>
<div style="left:359px;top:393px;width:1px;height:18px;background:#c8c8c8;"></div>
<div style="left:301px;top:395px;width:59px;height:14px;overflow:hidden;"><div class="t2" style="left:0;top:0;transform:scaleX(0.9017);transform-origin:0 0;">530000000031</div></div>
<div style="left:560px;top:393px;width:1px;height:18px;background:#c8c8c8;"></div>
<div style="left:362px;top:395px;width:199px;height:14px;overflow:hidden;"><div class="t2" style="left:0;top:0;transform:scaleX(0.9001);transform-origin:0 0;">5.30.00.0000031</div></div>
<div style="left:599px;top:393px;width:1px;height:18px;background:#c8c8c8;"></div>
<div style="left:600px;top:302px;width:17px;height:110px;background:#eaeaea;border-left:1px solid #f4f4f4;"></div>
<div style="left:606px;top:310px;width:0;height:0;border-left:3.5px solid transparent;border-right:3.5px solid transparent;border-bottom:4px solid #454545;"></div>
<div style="left:601px;top:351px;width:15px;height:14px;border:1px solid #979797;border-radius:2px;background:linear-gradient(90deg,#f1f1f1 0%,#ebebeb 50%,#d9d9d9 50%,#cfcfcf 100%);"></div>
<div style="left:606px;top:402px;width:0;height:0;border-left:3.5px solid transparent;border-right:3.5px solid transparent;border-top:4px solid #454545;"></div>
<div style="left:11px;top:411px;width:606px;height:19px;background:#eaeaea;border-top:1px solid #f8f8f8;"></div>
<div style="left:17px;top:417px;width:0;height:0;border-top:3.5px solid transparent;border-bottom:3.5px solid transparent;border-right:4px solid #454545;"></div>
<div style="left:105px;top:413px;width:15px;height:15px;border:1px solid #979797;border-radius:2px;background:linear-gradient(180deg,#f1f1f1 0%,#ebebeb 50%,#d9d9d9 50%,#cfcfcf 100%);"></div>
<div style="left:590px;top:417px;width:0;height:0;border-top:3.5px solid transparent;border-bottom:3.5px solid transparent;border-left:4px solid #454545;"></div>
<div style="left:600px;top:412px;width:17px;height:18px;background:#f0f0f0;"></div>
<div style="left:617px;top:301px;width:1px;height:130px;background:#e4e4e4;"></div>
<div style="left:10px;top:432px;width:609px;height:31px;border:1px solid #fff;border-bottom:none;"></div>
<div style="left:9px;top:431px;width:609px;height:31px;border:1px solid #a0a0a0;border-bottom:none;"></div>
<div class="btn" style="left:10px;top:435px;width:80px;height:24px;"></div>
<div class="btn" style="left:90px;top:435px;width:80px;height:24px;"></div>
<div class="btn" style="left:171px;top:435px;width:79px;height:24px;"></div>
<div class="btn" style="left:376px;top:435px;width:80px;height:24px;"></div>
<div class="btn" style="left:456px;top:435px;width:80px;height:24px;"></div>
<div class="btn" style="left:536px;top:435px;width:80px;height:24px;"></div>
<div class="t2" style="left:36px;top:441px;transform:scaleX(0.8983);transform-origin:0 0;color:#a0a0a0;">F5 Oblicz</div>
<div class="t2" style="left:113px;top:441px;transform:scaleX(0.8980);transform-origin:0 0;">F6 Eksport</div>
<div class="t2" style="left:196px;top:441px;transform:scaleX(0.8988);transform-origin:0 0;">F9 Drukuj</div>
<div class="t2" style="left:403px;top:441px;transform:scaleX(0.8990);transform-origin:0 0;">Do<u>m</u>yślne</div>
<div class="t2" style="left:480px;top:441px;transform:scaleX(0.8963);transform-origin:0 0;">Z<u>a</u>pamietaj</div>
<div class="t2" style="left:568px;top:441px;transform:scaleX(0.8970);transform-origin:0 0;"><u>Z</u>amknij</div>
<svg style="position:absolute;left:22px;top:441px;overflow:visible" width="12" height="14" viewBox="0 0 12 14"><path d="M3 0.5 L11.5 0.5 L7.5 5 L10 5 L2.5 13.5 L5 7.5 L2.5 7.5 L5.5 3.5 L1 3.5 Z" fill="#cfcfcf" stroke="#8c8c8c" stroke-width="1.7" stroke-linejoin="round"/></svg>
<svg style="position:absolute;left:97px;top:440px;overflow:visible" width="15" height="15" viewBox="0 0 15 15"><path d="M0.8 5 Q1 1 5 0.8 L13.8 0.8 L13.8 14.2 L1.5 14.2 Z" fill="#eef4ee" stroke="#2f8f2f" stroke-width="1.3"/><path d="M2.5 6 Q3 2.5 6 2.3 L12.5 2.3" fill="none" stroke="#7cc07c" stroke-width="1.2"/><path d="M3 13.5 L3 7" fill="none" stroke="#9ccf9c" stroke-width="1"/><path d="M4.2 5.6 L7.2 5.6 L8.8 8 L10.8 5.6 L13.2 5.6 L10 9.4 L12.6 13 L9.6 13 L8.2 10.8 L6.4 13 L3.8 13 L7 9.4 Z" fill="#1e8a1e"/></svg>
<svg style="position:absolute;left:177px;top:441px;overflow:visible" width="16" height="13" viewBox="0 0 16 13"><path d="M3.5 4 L3.5 0.7 L11.5 0.7 L11.5 4" fill="#f0f0f0" stroke="#000" stroke-width="1.4"/><path d="M0.8 6.2 Q0.8 3.8 3 3.8 L13 3.8 Q15.2 3.8 15.2 6.2 L15.2 10.5 Q15.2 12.3 13.4 12.3 L2.6 12.3 Q0.8 12.3 0.8 10.5 Z" fill="#c9c9c9" stroke="#000" stroke-width="1.5"/><path d="M2 5 L14 5 L14 7.5 L2 7.5 Z" fill="#e6e6e6"/><path d="M2 9 L14 9 L14 11.3 L2 11.3 Z" fill="#a8a8a8"/><path d="M4 4.2 L10.5 3 L13.2 7.2 L6.2 8.6 Z" fill="#1f78dc"/><path d="M4.3 4.4 L9.8 3.4 L10.8 5 L5.2 6 Z" fill="#6fb0f5"/><rect x="2.3" y="9.3" width="1.4" height="1.4" fill="#e02020"/><rect x="3.7" y="9.8" width="1.2" height="1" fill="#20b020"/></svg>
<svg style="position:absolute;left:383px;top:440px;overflow:visible" width="16" height="15" viewBox="0 0 16 15"><path d="M13.3 9.9 A6.3 6.3 0 1 1 12.4 3.6" fill="none" stroke="#0000f2" stroke-width="2.3"/><path d="M9.6 5.6 L15.4 5.6 L15.4 -0.2 Z" fill="#0000f2"/></svg>
<svg style="position:absolute;left:461px;top:441px;overflow:visible" width="14" height="14" viewBox="0 0 14 14" shape-rendering="crispEdges"><rect x="0.5" y="0.5" width="13" height="13" fill="#ff0000" stroke="#000" stroke-width="1"/><rect x="3" y="1" width="8" height="6" fill="#e8e8e8"/><rect x="3" y="1" width="8" height="1" fill="#fff"/><rect x="3" y="9" width="8" height="4.5" fill="#000"/><rect x="8" y="10" width="2" height="3" fill="#ff0000"/><rect x="12" y="1" width="1" height="1" fill="#fff"/></svg>
<svg style="position:absolute;left:548px;top:441px;overflow:visible" width="16" height="14" viewBox="0 0 16 14"><path d="M4.5 1 L13 0.6 L15.5 1.5 L15.5 13.4 L4.5 13.4 Z" fill="#1a1c3a" stroke="#000" stroke-width="1.2"/><path d="M5 1.2 L12.6 0.8 L12.6 12.8 L5 12.8 Z" fill="#a98236"/><path d="M6 2 L11.8 1.7 L11.8 6.5 L6 7.2 Z" fill="#c9a45a" opacity=".85"/><circle cx="10.2" cy="6.2" r="1.1" fill="#f4d8b8"/><path d="M0.6 2.8 L3.6 2.8 L7.4 6.6 L3.6 10.4 L0.6 10.4 L4.2 6.6 Z" fill="#fff" stroke="#000" stroke-width="1.1" stroke-linejoin="miter"/></svg>
</body></html>
